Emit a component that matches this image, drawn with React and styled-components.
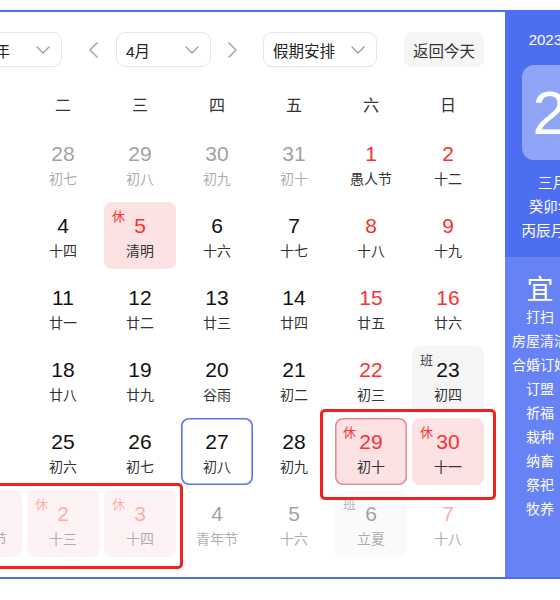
import React from "react";
import styled, { createGlobalStyle } from "styled-components";

const GlobalStyle = createGlobalStyle`
  html, body { margin: 0; padding: 0; background: #fff; overflow: hidden; }
  body { font-family: "Liberation Sans", "Noto Sans CJK SC", sans-serif; }
  * { box-sizing: border-box; }
`;

const Widget = styled.div`
  display: flex;
  width: max-content;
  margin: 10px 0 0 -71px;
  border: 2px solid #4e6ef2;
  background: #fff;
  box-shadow: 0 6px 14px rgba(0, 0, 0, 0.07);
`;

const Main = styled.div`
  padding: 20px 21px 20px 19px;
`;

const Toolbar = styled.div`
  display: flex;
  align-items: center;
  height: 35px;
`;

const Select = styled.div`
  display: flex;
  align-items: center;
  justify-content: space-between;
  width: ${(p) => p.$w}px;
  height: 35px;
  padding: 0 11px 0 9px;
  border: 1px solid #e3e5e9;
  border-radius: 9px;
  font-size: 15.5px;
  color: #222;
`;

const ArrowBtn = styled.div`
  display: flex;
  align-items: center;
  justify-content: center;
  width: 30px;
  height: 35px;
  margin: ${(p) => (p.$next ? "0 15px 0 7px" : "0 8px 0 16px")};
`;

const TodayBtn = styled.div`
  display: flex;
  align-items: center;
  justify-content: center;
  width: 80px;
  height: 35px;
  margin-left: auto;
  border-radius: 8px;
  background: #f5f5f6;
  font-size: 15.5px;
  color: #333;
`;

const WeekRow = styled.div`
  display: grid;
  grid-template-columns: repeat(7, 72px);
  column-gap: 5px;
  padding: 27px 0 12px;
`;

const WeekCell = styled.div`
  text-align: center;
  font-size: 16px;
  line-height: 24px;
  color: #333;
`;

const Grid = styled.div`
  position: relative;
  display: grid;
  grid-template-columns: repeat(7, 72px);
  grid-auto-rows: 67px;
  gap: 5px;
`;

const bgFor = (k) =>
  k === "rest" ? "#fde2e4" : k === "work" ? "#f5f5f6" : "transparent";

const DayCell = styled.div`
  position: relative;
  display: flex;
  flex-direction: column;
  align-items: center;
  padding-top: 12px;
  border-radius: 8px;
  background: ${(p) => bgFor(p.$kind)};
  opacity: ${(p) => (p.$other ? 0.4 : 1)};
  box-shadow: ${(p) =>
    p.$today
      ? "inset 0 0 0 1.6px #5b74ec"
      : p.$selected
      ? "inset 0 0 0 1.6px #ea8b92"
      : "none"};
`;

const Num = styled.div`
  font-size: 21px;
  line-height: 24px;
  color: ${(p) => (p.$red ? "#f73131" : "#111")};
`;

const Lunar = styled.div`
  margin-top: 3px;
  font-size: 14px;
  line-height: 20px;
  color: #333;
  white-space: nowrap;
`;

const Tag = styled.span`
  position: absolute;
  top: 7px;
  left: 8px;
  font-size: 13px;
  line-height: 16px;
  color: ${(p) => (p.$kind === "rest" ? "#f73131" : "#444")};
`;

const Mark = styled.div`
  position: absolute;
  left: ${(p) => p.$x}px;
  top: ${(p) => p.$y}px;
  width: ${(p) => p.$w}px;
  height: ${(p) => p.$h}px;
  border: 3px solid #f41f1f;
  border-radius: 5px;
  pointer-events: none;
`;

const Panel = styled.div`
  display: flex;
  flex-direction: column;
  width: 124px;
  color: #fff;
`;

const PanelTop = styled.div`
  display: flex;
  flex-direction: column;
  align-items: center;
  padding: 18px 0 14px;
  background: #4e6ef2;
`;

const DateLine = styled.div`
  font-size: 15px;
  line-height: 20px;
  white-space: nowrap;
`;

const BigDay = styled.div`
  display: flex;
  align-items: center;
  justify-content: center;
  width: 90px;
  height: 95px;
  margin: 15px 0 11px;
  border-radius: 12px;
  background: rgba(255, 255, 255, 0.38);
  font-size: 62px;
  line-height: 1;
`;

const LunarLine = styled.div`
  font-size: 14.5px;
  line-height: 24px;
  white-space: nowrap;
`;

const PanelBottom = styled.div`
  flex: 1;
  display: grid;
  grid-template-columns: 58px 58px;
  align-items: start;
  padding: 18px 0 0 6px;
  background: #6782f4;
`;

const YiCol = styled.div`
  display: flex;
  flex-direction: column;
  align-items: center;
`;

const YiTitle = styled.div`
  font-size: 27px;
  line-height: 30px;
`;

const YiItem = styled.div`
  font-size: 14px;
  line-height: 24px;
  white-space: nowrap;
`;

const Chevron = () => (
  <svg width="14" height="8" viewBox="0 0 14 8" fill="none">
    <path d="M1 1 L7 7 L13 1" stroke="#9a9a9a" strokeWidth="1.3" strokeLinecap="round" strokeLinejoin="round" />
  </svg>
);

const Arrow = ({ next }) => (
  <svg width="12" height="16" viewBox="0 0 12 16" fill="none">
    <path
      d={next ? "M2 1 L9 8 L2 15" : "M10 1 L3 8 L10 15"}
      stroke="#a8a8a8"
      strokeWidth="1.6"
      strokeLinecap="round"
      strokeLinejoin="round"
    />
  </svg>
);

const d = (n, l, o = {}) => ({ n, l, ...o });

const rows = [
  [d(27, "初六", { other: 1 }), d(28, "初七", { other: 1 }), d(29, "初八", { other: 1 }), d(30, "初九", { other: 1 }), d(31, "初十", { other: 1 }), d(1, "愚人节", { red: 1 }), d(2, "十二", { red: 1 })],
  [d(3, "十三"), d(4, "十四"), d(5, "清明", { kind: "rest", red: 1 }), d(6, "十六"), d(7, "十七"), d(8, "十八", { red: 1 }), d(9, "十九", { red: 1 })],
  [d(10, "二十"), d(11, "廿一"), d(12, "廿二"), d(13, "廿三"), d(14, "廿四"), d(15, "廿五", { red: 1 }), d(16, "廿六", { red: 1 })],
  [d(17, "廿七"), d(18, "廿八"), d(19, "廿九"), d(20, "谷雨"), d(21, "初二"), d(22, "初三", { red: 1 }), d(23, "初四", { kind: "work" })],
  [d(24, "初五"), d(25, "初六"), d(26, "初七"), d(27, "初八", { today: 1 }), d(28, "初九"), d(29, "初十", { kind: "rest", red: 1, selected: 1 }), d(30, "十一", { kind: "rest", red: 1 })],
  [d(1, "劳动节", { kind: "rest", red: 1, other: 1 }), d(2, "十三", { kind: "rest", red: 1, other: 1 }), d(3, "十四", { kind: "rest", red: 1, other: 1 }), d(4, "青年节", { other: 1 }), d(5, "十六", { other: 1 }), d(6, "立夏", { kind: "work", other: 1 }), d(7, "十八", { red: 1, other: 1 })],
];

const weekdays = ["一", "二", "三", "四", "五", "六", "日"];
const yi = ["打扫", "房屋清洁", "合婚订婚", "订盟", "祈福", "栽种", "纳畜", "祭祀", "牧养"];
const ji = ["开市", "安床", "入宅", "安葬"];

export default function App() {
  return (
    <>
      <GlobalStyle />
      <Widget>
        <Main>
          <Toolbar>
            <Select $w={112}>
              <span>2023年</span>
              <Chevron />
            </Select>
            <ArrowBtn>
              <Arrow />
            </ArrowBtn>
            <Select $w={95}>
              <span>4月</span>
              <Chevron />
            </Select>
            <ArrowBtn $next>
              <Arrow next />
            </ArrowBtn>
            <Select $w={114}>
              <span>假期安排</span>
              <Chevron />
            </Select>
            <TodayBtn>返回今天</TodayBtn>
          </Toolbar>
          <WeekRow>
            {weekdays.map((w) => (
              <WeekCell key={w}>{w}</WeekCell>
            ))}
          </WeekRow>
          <Grid>
            {rows.flat().map((c, i) => (
              <DayCell
                key={i}
                $kind={c.kind}
                $other={c.other}
                $today={c.today}
                $selected={c.selected}
              >
                {c.kind && <Tag $kind={c.kind}>{c.kind === "rest" ? "休" : "班"}</Tag>}
                <Num $red={c.red}>{c.n}</Num>
                <Lunar>{c.l}</Lunar>
              </DayCell>
            ))}
            <Mark $x={370} $y={279} $w={176} $h={91} />
            <Mark $x={-8} $y={353} $w={241} $h={86} />
          </Grid>
        </Main>
        <Panel>
          <PanelTop>
            <DateLine>2023-04-27</DateLine>
            <BigDay>27</BigDay>
            <LunarLine>三月初八</LunarLine>
            <LunarLine>癸卯年 兔年</LunarLine>
            <LunarLine>丙辰月 乙卯日</LunarLine>
          </PanelTop>
          <PanelBottom>
            <YiCol>
              <YiTitle>宜</YiTitle>
              {yi.map((t) => (
                <YiItem key={t}>{t}</YiItem>
              ))}
            </YiCol>
            <YiCol>
              <YiTitle>忌</YiTitle>
              {ji.map((t) => (
                <YiItem key={t}>{t}</YiItem>
              ))}
            </YiCol>
          </PanelBottom>
        </Panel>
      </Widget>
    </>
  );
}
